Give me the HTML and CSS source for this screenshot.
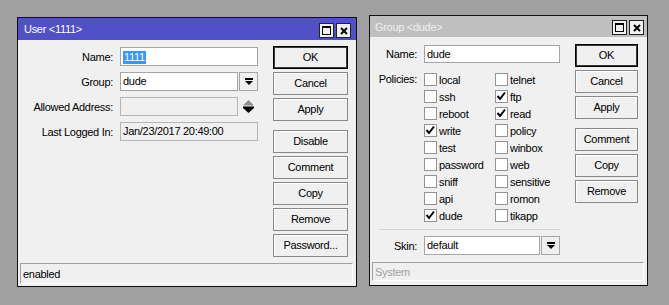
FILE: index.html
```html
<!DOCTYPE html>
<html lang="en">
<head>
    <meta charset="UTF-8">
    <title>Winbox</title>
    <link rel="stylesheet" href="styles.css">
</head>
<body>
<div class="desk">
    <!-- User window (active) -->
    <div class="win win-user">
        <div class="titlebar">
            <span class="title">User &lt;1111&gt;</span>
            <span class="tbtns">
                <span class="tbtn"><svg width="9" height="9" viewBox="0 0 9 9"><rect x="0.5" y="0.5" width="8" height="8" fill="none" stroke="#000"/><rect x="0" y="0" width="9" height="2" fill="#000"/></svg></span>
                <span class="tbtn"><svg width="8" height="8" viewBox="0 0 8 8"><path d="M1 1L7 7M7 1L1 7" stroke="#000" stroke-width="2"/></svg></span>
            </span>
        </div>
        <div class="wbody">
            <div class="form">
                <div class="row">
                    <span class="lbl">Name:</span>
                    <span class="field wide"><span class="sel">1111</span></span>
                </div>
                <div class="row">
                    <span class="lbl">Group:</span>
                    <span class="field">dude</span>
                    <span class="dd"><svg width="8" height="8" viewBox="0 0 8 8"><rect x="0" y="0" width="8" height="2"/><path d="M0 3h8l-4 4z"/></svg></span>
                </div>
                <div class="row">
                    <span class="lbl">Allowed Address:</span>
                    <span class="field off"></span>
                    <span class="spin"><svg width="11" height="13" viewBox="0 0 11 13"><path d="M5.5 0L11 5.5H0z" fill="#8e8e8e"/><rect x="0" y="6.5" width="11" height="1.5"/><path d="M0 8h11l-5.5 5z"/></svg></span>
                </div>
                <div class="row">
                    <span class="lbl">Last Logged In:</span>
                    <span class="field wide off">Jan/23/2017 20:49:00</span>
                </div>
            </div>
            <div class="buttons">
                <div class="btn def">OK</div>
                <div class="btn">Cancel</div>
                <div class="btn">Apply</div>
                <div class="btn sep">Disable</div>
                <div class="btn">Comment</div>
                <div class="btn">Copy</div>
                <div class="btn">Remove</div>
                <div class="btn">Password...</div>
            </div>
        </div>
        <div class="status">enabled</div>
    </div>

    <!-- Group window (inactive) -->
    <div class="win win-group">
        <div class="titlebar">
            <span class="title">Group &lt;dude&gt;</span>
            <span class="tbtns">
                <span class="tbtn"><svg width="9" height="9" viewBox="0 0 9 9"><rect x="0.5" y="0.5" width="8" height="8" fill="none" stroke="#000"/><rect x="0" y="0" width="9" height="2" fill="#000"/></svg></span>
                <span class="tbtn"><svg width="8" height="8" viewBox="0 0 8 8"><path d="M1 1L7 7M7 1L1 7" stroke="#000" stroke-width="2"/></svg></span>
            </span>
        </div>
        <div class="wbody">
            <div class="form">
                <div class="row">
                    <span class="lbl">Name:</span>
                    <span class="field wide">dude</span>
                </div>
                <div class="policies">
                    <span class="lbl">Policies:</span>
                    <div class="checks">
                        <div class="chk"><span class="box"></span>local</div>
                        <div class="chk"><span class="box"></span>telnet</div>
                        <div class="chk"><span class="box"></span>ssh</div>
                        <div class="chk"><span class="box on"><svg width="11" height="11" viewBox="0 0 11 11"><path d="M1.5 5L4 8L9 1.5" fill="none" stroke="#000" stroke-width="2"/></svg></span>ftp</div>
                        <div class="chk"><span class="box"></span>reboot</div>
                        <div class="chk"><span class="box on"><svg width="11" height="11" viewBox="0 0 11 11"><path d="M1.5 5L4 8L9 1.5" fill="none" stroke="#000" stroke-width="2"/></svg></span>read</div>
                        <div class="chk"><span class="box on"><svg width="11" height="11" viewBox="0 0 11 11"><path d="M1.5 5L4 8L9 1.5" fill="none" stroke="#000" stroke-width="2"/></svg></span>write</div>
                        <div class="chk"><span class="box"></span>policy</div>
                        <div class="chk"><span class="box"></span>test</div>
                        <div class="chk"><span class="box"></span>winbox</div>
                        <div class="chk"><span class="box"></span>password</div>
                        <div class="chk"><span class="box"></span>web</div>
                        <div class="chk"><span class="box"></span>sniff</div>
                        <div class="chk"><span class="box"></span>sensitive</div>
                        <div class="chk"><span class="box"></span>api</div>
                        <div class="chk"><span class="box"></span>romon</div>
                        <div class="chk"><span class="box on"><svg width="11" height="11" viewBox="0 0 11 11"><path d="M1.5 5L4 8L9 1.5" fill="none" stroke="#000" stroke-width="2"/></svg></span>dude</div>
                        <div class="chk"><span class="box"></span>tikapp</div>
                    </div>
                </div>
                <div class="hr"></div>
                <div class="row">
                    <span class="lbl">Skin:</span>
                    <span class="field skin">default</span>
                    <span class="dd"><svg width="8" height="8" viewBox="0 0 8 8"><rect x="0" y="0" width="8" height="2"/><path d="M0 3h8l-4 4z"/></svg></span>
                </div>
            </div>
            <div class="buttons">
                <div class="btn def">OK</div>
                <div class="btn">Cancel</div>
                <div class="btn">Apply</div>
                <div class="btn sep">Comment</div>
                <div class="btn">Copy</div>
                <div class="btn">Remove</div>
            </div>
        </div>
        <div class="status gray">System</div>
    </div>
</div>
</body>
</html>
```

FILE: styles.css
```css
*{margin:0;padding:0;box-sizing:border-box;}

html,body{height:100%;overflow:hidden;}
body{background:#a0a0a0;font:11px "Liberation Sans",Arial,sans-serif;letter-spacing:-0.3px;color:#000;}

.desk{display:flex;align-items:flex-start;gap:12px;padding:15px 0 0 17px;}

/* window frame */
.win{display:flex;flex-direction:column;background:#f0f0f0;border:1px solid #111;}
.win-user{width:340px;height:270px;margin-top:2px;}
.win-group{width:279px;height:271px;}

.titlebar{display:flex;justify-content:space-between;align-items:center;height:22px;padding:0 5px 0 6px;background:#5050c8;color:#fff;}
.win-group .titlebar{height:21px;padding:0 3px 0 5px;background:#bfbfbf;color:#efefef;}
.tbtns{display:flex;gap:2px;align-self:flex-end;margin-bottom:2px;}
.tbtn{width:15px;height:15px;border:1px solid #222;background:#f0f0f0;display:flex;align-items:center;justify-content:center;}

.wbody{flex:1;display:flex;}
.win-user .wbody{padding:6px 8px 0 0;}
.win-group .wbody{padding:7px 9px 0 0;}

/* form */
.form{padding-top:1px;}
.win-user .form{width:240px;margin-right:15px;}
.win-group .form{width:190px;margin-right:15px;}

.row{display:flex;align-items:center;height:19px;margin-bottom:6px;}
.win-group .row{height:18px;}
.win-group .row:last-child{height:19px;}

.lbl{flex:none;text-align:right;padding-right:7px;}
.win-user .lbl{width:102px;}
.win-group .lbl{width:54px;}

.field{display:block;width:118px;height:100%;border:1px solid #a5a5a5;background:#fff;padding-left:2px;line-height:17px;white-space:nowrap;overflow:hidden;}
.field.wide{width:138px;}
.win-group .field.wide{width:136px;}
.field.skin{width:116px;}
.field.off{background:#f0f0f0;border-color:#b4b4b4;}
.sel{display:inline-block;background:#3399ff;color:#fff;line-height:13px;padding:0 1px;vertical-align:middle;}

.dd{width:19px;height:100%;margin-left:1px;border:1px solid #a5a5a5;background:#f0f0f0;display:flex;align-items:center;justify-content:center;}
.spin{width:19px;height:100%;margin-left:1px;display:flex;align-items:center;justify-content:center;}

/* policies */
.policies{display:flex;margin-top:10px;}
.policies .lbl{line-height:13px;}
.checks{display:grid;grid-template-columns:71px 71px;row-gap:4px;}
.chk{display:flex;align-items:center;height:13px;}
.box{width:13px;height:13px;margin-right:2px;border:1px solid #949494;background:#fff;display:flex;align-items:center;justify-content:center;}

.hr{margin:7px 0 6px 9px;border-top:1px solid #d3d3d3;}

/* buttons */
.buttons{display:flex;flex-direction:column;}
.win-user .buttons{width:75px;}
.win-group .buttons{width:63px;}
.btn{height:23px;margin-bottom:3px;border:1px solid #888;background:#f0f0f0;box-shadow:inset 1px 1px 0 #fff;text-align:center;line-height:21px;}
.btn.def{border-color:#000;box-shadow:inset 0 0 0 1px #3a3a3a;}
.btn.sep{margin-top:6px;}

/* status bar */
.status{height:21px;margin:0 3px 2px 2px;padding-left:2px;line-height:20px;border-top:1px solid #a0a0a0;border-left:1px solid #a0a0a0;border-right:1px solid #fff;border-bottom:1px solid #fff;}
.status.gray{height:19px;line-height:18px;margin-bottom:4px;color:#a0a0a0;}
```
